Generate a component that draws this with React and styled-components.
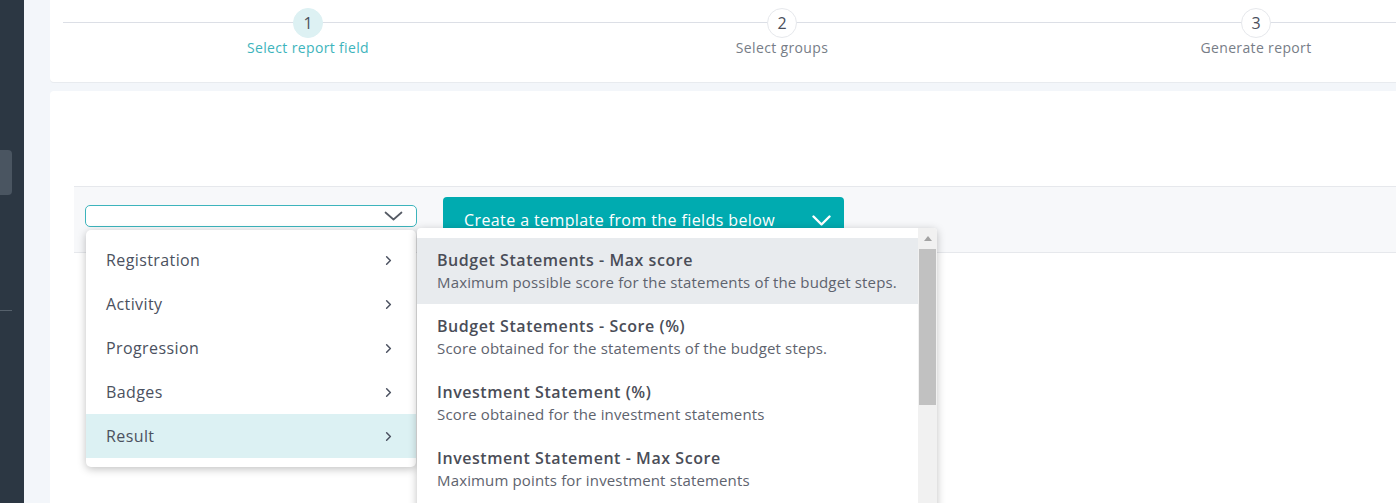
import React from "react";
import styled, { createGlobalStyle } from "styled-components";
import { ChevronRight } from "lucide-react";

const Global = createGlobalStyle`
  html, body { margin: 0; padding: 0; }
  body { font-family: "Open Sans", "Liberation Sans", sans-serif; color: #4a4f5b; }
  * { box-sizing: border-box; }
`;

const Layout = styled.div`
  display: flex;
  width: 1396px;
  height: 503px;
  overflow: hidden;
`;

const Sidebar = styled.aside`
  width: 24px;
  flex: none;
  background: #2c3743;
  display: flex;
  flex-direction: column;
  padding-top: 150px;
`;

const SideActive = styled.div`
  width: 12px;
  height: 45px;
  background: #4a5561;
  border-radius: 0 4px 4px 0;
`;

const SideDivider = styled.div`
  width: 12px;
  height: 1px;
  background: #56616c;
  margin-top: 115px;
`;

const Main = styled.main`
  flex: 1;
  background: #f3f6fa;
  padding-left: 26px;
  display: flex;
  flex-direction: column;
  gap: 9px;
`;

const StepsCard = styled.section`
  height: 82px;
  background: #fff;
  border-bottom-left-radius: 4px;
  box-shadow: 0 1px 0 #e8ebef;
  padding-left: 13px;
`;

const Stepper = styled.div`
  position: relative;
  display: grid;
  grid-template-columns: repeat(3, 474px);
  padding-left: 8px;
  padding-top: 8px;
  &::before {
    content: "";
    position: absolute;
    left: 0;
    right: 0;
    top: 22px;
    height: 1px;
    background: #dcdfe6;
  }
`;

const Step = styled.div`
  position: relative;
  display: flex;
  flex-direction: column;
  align-items: center;
  gap: 0;
`;

const StepCircle = styled.div`
  width: 30px;
  height: 30px;
  border-radius: 50%;
  display: flex;
  align-items: center;
  justify-content: center;
  font-size: 16px;
  color: #4a4f5b;
  background: ${(p) => (p.$active ? "#ddf1f3" : "#fff")};
  border: 1px solid ${(p) => (p.$active ? "#ddf1f3" : "#e6e8ec")};
`;

const StepLabel = styled.div`
  font-size: 14px;
  letter-spacing: 0.35px;
  color: ${(p) => (p.$active ? "#3db4bc" : "#777d87")};
`;

const ContentCard = styled.section`
  flex: 1;
  background: #fff;
  border-top-left-radius: 4px;
  padding-top: 95px;
  padding-left: 24px;
`;

const Toolbar = styled.div`
  height: 67px;
  background: #f7f8fa;
  border-top: 1px solid #e6e8ec;
  border-bottom: 1px solid #e6e8ec;
  display: flex;
  align-items: flex-start;
  padding-left: 11px;
  gap: 26px;
`;

const SelectWrap = styled.div`
  position: relative;
  margin-top: 18px;
`;

const SelectBox = styled.div`
  width: 332px;
  height: 22px;
  background: #fff;
  border: 1px solid #3db4bc;
  border-radius: 5px;
  display: flex;
  align-items: center;
  justify-content: flex-end;
  padding-right: 13px;
  color: #555a64;
`;

const TemplateButton = styled.button`
  margin-top: 10px;
  width: 401px;
  height: 46px;
  border: none;
  border-radius: 4px;
  background: #00abb0;
  color: #fff;
  font-family: inherit;
  font-size: 16px;
  letter-spacing: 0.4px;
  display: flex;
  align-items: center;
  justify-content: space-between;
  padding: 0 13px 0 21px;
  cursor: pointer;
`;

const CategoryMenu = styled.ul`
  position: absolute;
  left: 1px;
  top: 25px;
  width: 330px;
  margin: 0;
  list-style: none;
  background: #fff;
  border-radius: 5px;
  box-shadow: 0 2px 8px rgba(0, 0, 0, 0.25);
  padding: 8px 0 9px;
  z-index: 2;
`;

const CategoryItem = styled.li`
  height: 44px;
  display: flex;
  align-items: center;
  justify-content: space-between;
  padding: 0 20px 0 20px;
  font-size: 16px;
  letter-spacing: 0.4px;
  color: #4b5160;
  background: ${(p) => (p.$active ? "#dcf1f3" : "transparent")};
`;

const FieldMenu = styled.div`
  position: absolute;
  left: 332px;
  top: 23px;
  width: 520px;
  height: 290px;
  background: #fff;
  border-radius: 4px;
  box-shadow: 0 2px 8px rgba(0, 0, 0, 0.25);
  display: flex;
  overflow: hidden;
  z-index: 3;
`;

const FieldList = styled.ul`
  flex: 1;
  margin: 0;
  padding: 10px 0 0;
  list-style: none;
`;

const FieldItem = styled.li`
  height: 66px;
  padding: 11px 20px 0;
  background: ${(p) => (p.$active ? "#e8ebee" : "transparent")};
`;

const FieldTitle = styled.div`
  font-size: 16px;
  font-weight: 600;
  letter-spacing: 0.55px;
  color: #4a4d57;
  line-height: 22px;
`;

const FieldDesc = styled.div`
  font-size: 15px;
  letter-spacing: 0.15px;
  color: #5e636e;
  line-height: 22px;
`;

const Scrollbar = styled.div`
  width: 19px;
  flex: none;
  background: #f1f1f1;
  display: flex;
  flex-direction: column;
  align-items: center;
  padding-top: 8px;
`;

const ScrollArrow = styled.div`
  width: 0;
  height: 0;
  border-left: 4px solid transparent;
  border-right: 4px solid transparent;
  border-bottom: 5px solid #a3a3a3;
`;

const ScrollThumb = styled.div`
  width: 17px;
  height: 156px;
  background: #c1c1c1;
  margin-top: 8px;
`;

const Caret = ({ width = 19, height = 10, stroke = 1.6 }) => (
  <svg width={width} height={height} viewBox={`0 0 ${width} ${height}`} fill="none">
    <polyline
      points={`1.5,1.5 ${width / 2},${height - 1.5} ${width - 1.5},1.5`}
      stroke="currentColor"
      strokeWidth={stroke}
      strokeLinecap="round"
      strokeLinejoin="round"
    />
  </svg>
);

const categories = ["Registration", "Activity", "Progression", "Badges", "Result"];

const fields = [
  ["Budget Statements - Max score", "Maximum possible score for the statements of the budget steps."],
  ["Budget Statements - Score (%)", "Score obtained for the statements of the budget steps."],
  ["Investment Statement (%)", "Score obtained for the investment statements"],
  ["Investment Statement - Max Score", "Maximum points for investment statements"],
];

const steps = ["Select report field", "Select groups", "Generate report"];

export default function App() {
  return (
    <>
      <Global />
      <Layout>
        <Sidebar>
          <SideActive />
          <SideDivider />
        </Sidebar>
        <Main>
          <StepsCard>
            <Stepper>
              {steps.map((s, i) => (
                <Step key={s}>
                  <StepCircle $active={i === 0}>{i + 1}</StepCircle>
                  <StepLabel $active={i === 0}>{s}</StepLabel>
                </Step>
              ))}
            </Stepper>
          </StepsCard>
          <ContentCard>
            <Toolbar>
              <SelectWrap>
                <SelectBox>
                  <Caret width={19} height={10} stroke={1.7} />
                </SelectBox>
                <CategoryMenu>
                  {categories.map((c) => (
                    <CategoryItem key={c} $active={c === "Result"}>
                      {c}
                      <ChevronRight size={15} strokeWidth={2.4} />
                    </CategoryItem>
                  ))}
                </CategoryMenu>
                <FieldMenu>
                  <FieldList>
                    {fields.map(([t, d], i) => (
                      <FieldItem key={t} $active={i === 0}>
                        <FieldTitle>{t}</FieldTitle>
                        <FieldDesc>{d}</FieldDesc>
                      </FieldItem>
                    ))}
                  </FieldList>
                  <Scrollbar>
                    <ScrollArrow />
                    <ScrollThumb />
                  </Scrollbar>
                </FieldMenu>
              </SelectWrap>
              <TemplateButton>
                Create a template from the fields below
                <Caret width={19} height={11} stroke={2.4} />
              </TemplateButton>
            </Toolbar>
          </ContentCard>
        </Main>
      </Layout>
    </>
  );
}
